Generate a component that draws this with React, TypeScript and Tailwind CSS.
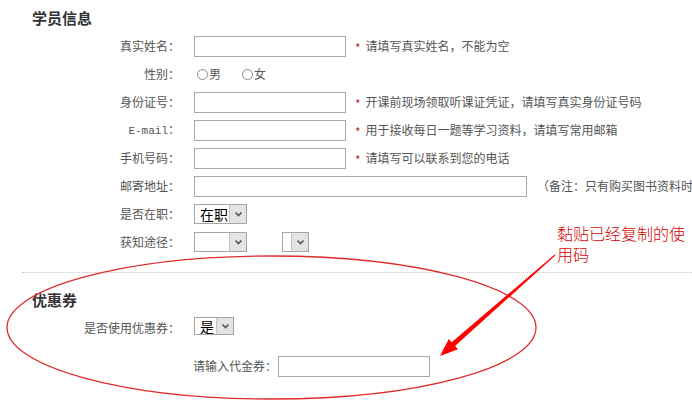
import React from 'react';

// Old-style form field helpers
const TextInput: React.FC<{ w?: string }> = ({ w = 'w-[152px]' }) => (
  <div className={`${w} h-[21px] border border-[#a9a9a9] bg-white shrink-0`} />
);

const Chevron = () => (
  <svg width="9" height="6" viewBox="0 0 9 6">
    <path d="M1.5 1.5 L4.5 4.5 L7.5 1.5" fill="none" stroke="#555" strokeWidth="1.6" />
  </svg>
);

const FakeSelect: React.FC<{ value?: string; textW: string; h?: string }> = ({ value, textW, h = 'h-[20px]' }) => (
  <div className={`flex ${h} border border-[#a5a5a5] bg-white shrink-0`}>
    <div className={`${textW} flex items-center pl-[5px] text-[14px] text-black`}>{value}</div>
    <div className="w-[17px] flex items-center justify-center bg-[#e3e3e3] border-l border-[#c4c4c4]">
      <Chevron />
    </div>
  </div>
);

const Tip: React.FC<{ text: string }> = ({ text }) => (
  <div className="flex items-center ml-[9px] whitespace-nowrap">
    <span className="text-[#b5344a] text-[12px] mr-[5px] mt-[3px]">*</span>
    <span className="text-[#555]">{text}</span>
  </div>
);

const Row: React.FC<{ label: string; mono?: boolean; children: React.ReactNode }> = ({ label, mono, children }) => (
  <div className="flex items-center h-[28px]">
    <div className={`w-[180px] text-right text-[#555] shrink-0 ${mono ? "font-['Liberation_Mono'] text-[11px]" : ''}`}>
      {mono ? (
        <>
          {label}
          <span className="font-['Noto_Sans_CJK_SC'] text-[12px]">：</span>
        </>
      ) : (
        label + '：'
      )}
    </div>
    <div className="flex items-center ml-[14px]">{children}</div>
  </div>
);

const Radio: React.FC<{ label: string }> = ({ label }) => (
  <div className="flex items-center">
    <span className="w-[11px] h-[11px] rounded-full border border-[#8a8a8a] bg-white mr-[1px]" />
    <span className="text-[#555]">{label}</span>
  </div>
);

export default function App() {
  return (
    <div className="relative w-[692px] h-[401px] overflow-hidden bg-white font-['Noto_Sans_CJK_SC','SimSun',sans-serif] text-[12px] leading-none">
      {/* 学员信息 */}
      <div className="h-[32px] flex items-center pl-[32px] pt-[2px] text-[15px] font-bold text-[#333]">学员信息</div>
      <Row label="真实姓名">
        <TextInput />
        <Tip text="请填写真实姓名，不能为空" />
      </Row>
      <Row label="性别">
        <div className="flex items-center ml-[3px] gap-[21px]">
          <Radio label="男" />
          <Radio label="女" />
        </div>
      </Row>
      <Row label="身份证号">
        <TextInput />
        <Tip text="开课前现场领取听课证凭证，请填写真实身份证号码" />
      </Row>
      <Row label="E-mail" mono>
        <TextInput />
        <Tip text="用于接收每日一题等学习资料，请填写常用邮箱" />
      </Row>
      <Row label="手机号码">
        <TextInput />
        <Tip text="请填写可以联系到您的电话" />
      </Row>
      <Row label="邮寄地址">
        <TextInput w="w-[333px]" />
        <span className="ml-[10px] text-[#555] whitespace-nowrap">（备注：只有购买图书资料时才需要填写）</span>
      </Row>
      <Row label="是否在职">
        <FakeSelect value="在职" textW="w-[34px]" />
      </Row>
      <Row label="获知途径">
        <FakeSelect textW="w-[34px]" />
        <div className="ml-[35px]">
          <FakeSelect textW="w-[8px]" />
        </div>
      </Row>

      {/* divider */}
      <div className="mt-[16px] ml-[22px] border-t border-dotted border-[#c8c8c8]" />

      {/* 优惠券 */}
      <div className="mt-[12px] h-[28px] flex items-center pl-[32px] text-[15px] font-bold text-[#333]">优惠券</div>
      <div className="flex items-center h-[26px]">
        <div className="w-[180px] text-right text-[#555] mt-[4px]">是否使用优惠券：</div>
        <div className="ml-[14px]">
          <FakeSelect value="是" textW="w-[21px]" h="h-[18px]" />
        </div>
      </div>
      <div className="flex items-center h-[26px] mt-[14px]">
        <div className="w-[277px] text-right text-[#555]">请输入代金券：</div>
        <div className="ml-[1px]">
          <TextInput />
        </div>
      </div>

      {/* annotation overlay */}
      <svg className="absolute left-0 top-0 pointer-events-none" width="692" height="401" viewBox="0 0 692 401">
        <ellipse cx="271.5" cy="327.5" rx="264.5" ry="71.5" fill="none" stroke="#e02a2a" strokeWidth="1.3" />
        <polygon
          points="555.3,255.4 554.7,254.6 451.7,342.2 448.8,338.9 440,356 458,349.3 455.1,346"
          fill="#ff0000"
        />
      </svg>
      <div className="absolute left-[557px] top-[223px] text-[16px] leading-[21px] font-light text-[#d40000] whitespace-nowrap">
        <div>黏贴已经复制的使</div>
        <div>用码</div>
      </div>
    </div>
  );
}
